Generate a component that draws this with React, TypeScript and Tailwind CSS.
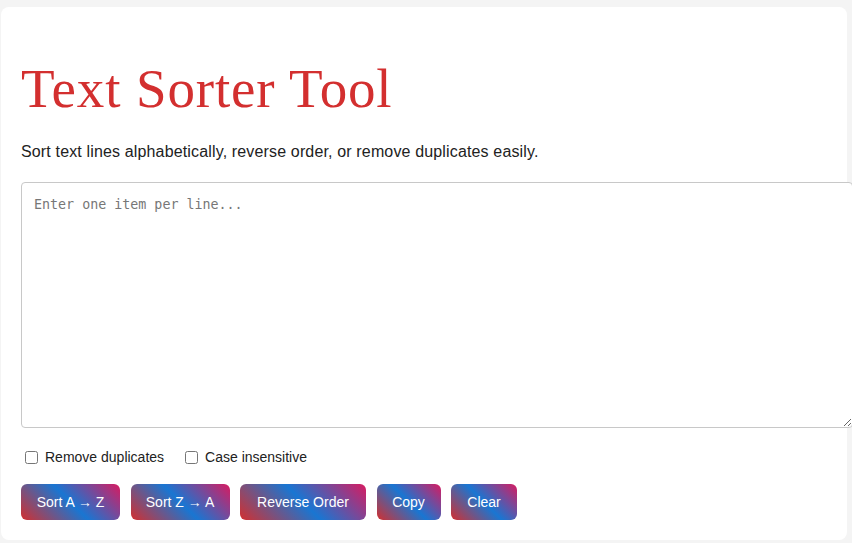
import React, { useState } from 'react';

const buttons = [
  { label: 'Sort A → Z', w: 'w-[99px]' },
  { label: 'Sort Z → A', w: 'w-[99px]' },
  { label: 'Reverse Order', w: 'w-[126px]' },
  { label: 'Copy', w: 'w-[64px]' },
  { label: 'Clear', w: 'w-[66px]' },
];

export default function App() {
  const [text, setText] = useState('');
  const [dedupe, setDedupe] = useState(false);
  const [caseless, setCaseless] = useState(false);

  return (
    <div className="min-h-screen bg-[#f4f4f4] pt-[7px] pl-px font-['Liberation_Sans',Arial,sans-serif] text-[#222]">
      {/* Card */}
      <div className="w-[846px] bg-white rounded-lg px-5 pt-5 pb-5">
        <h1 className="mt-[29px] text-[55px] leading-[66px] tracking-[0.85px] text-[#d32f2f] font-['Liberation_Serif','Times_New_Roman',serif] font-normal">
          Text Sorter Tool
        </h1>
        <p className="mt-[18px] text-base leading-6 tracking-[0.15px] text-[#222]">
          Sort text lines alphabetically, reverse order, or remove duplicates easily.
        </p>

        <textarea
          value={text}
          onChange={(e) => setText(e.target.value)}
          placeholder="Enter one item per line..."
          className="mt-[18px] block w-[832px] h-[246px] p-3 border border-[#c8c8c8] rounded bg-white text-[13.333px] font-['DejaVu_Sans_Mono',monospace] placeholder:text-[#777] outline-none"
        />

        {/* Options */}
        <div className="mt-[19px] flex items-center h-5 text-sm leading-5 text-[#222]">
          <label className="flex items-center mr-[17px]">
            <input
              type="checkbox"
              checked={dedupe}
              onChange={(e) => setDedupe(e.target.checked)}
              className="ml-1 mr-[7px] w-[13px] h-[13px]"
            />
            Remove duplicates
          </label>
          <label className="flex items-center">
            <input
              type="checkbox"
              checked={caseless}
              onChange={(e) => setCaseless(e.target.checked)}
              className="ml-1 mr-[7px] w-[13px] h-[13px]"
            />
            Case insensitive
          </label>
        </div>

        {/* Actions */}
        <div className="mt-[17px] flex gap-[10.5px]">
          {buttons.map((b) => (
            <button
              key={b.label}
              className={`${b.w} h-9 rounded-md text-sm text-white bg-[linear-gradient(45deg,#d32f2f,#1976d2,#d81b60)]`}
            >
              {b.label}
            </button>
          ))}
        </div>
      </div>
    </div>
  );
}
